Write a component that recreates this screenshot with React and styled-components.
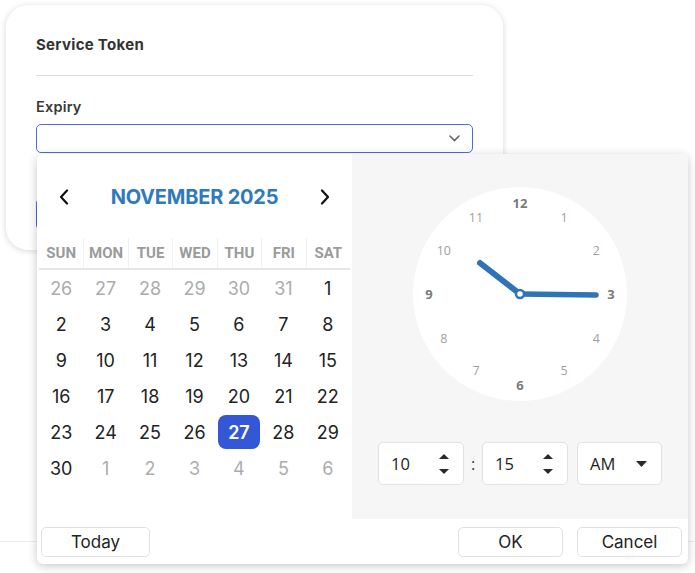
import React from "react";
import styled, { createGlobalStyle } from "styled-components";

const GlobalStyle = createGlobalStyle`
  html, body {
    margin: 0;
    padding: 0;
    background: #ffffff;
    font-family: Inter, "Open Sans", sans-serif;
  }
  * { box-sizing: border-box; }
`;

const Page = styled.div`
  position: relative;
  width: 695px;
  height: 573px;
  display: flex;
  flex-direction: column;
  padding: 5px 0 0 6px;
  overflow: hidden;
`;

const Card = styled.div`
  width: 497px;
  height: 245px;
  background: #fff;
  border-radius: 22px;
  box-shadow: 0 1px 6px rgba(0, 0, 0, 0.16);
  padding: 30px 30px 0;
  display: flex;
  flex-direction: column;
`;

const Title = styled.div`
  font-size: 15px;
  font-weight: 700;
  line-height: 20px;
  letter-spacing: 0.3px;
  color: #333;
`;

const Divider = styled.div`
  height: 1px;
  background: #dcdcdc;
  margin-top: 20px;
`;

const Label = styled.div`
  margin-top: 21px;
  font-size: 14.5px;
  font-weight: 600;
  line-height: 20px;
  letter-spacing: 0.2px;
  color: #3a3a3a;
`;

const Field = styled.div`
  position: relative;
  margin-top: 7px;
`;

const Select = styled.div`
  height: 29px;
  border: 1px solid #4f6be0;
  border-radius: 5px;
  display: flex;
  align-items: center;
  justify-content: flex-end;
  padding-right: 12px;
`;

const CardButton = styled.div`
  margin-top: 45px;
  width: 120px;
  height: 32px;
  border: 1px solid #4f6be0;
  border-radius: 5px;
`;

const Footer = styled.div`
  margin: auto 0 0 -6px;
  height: 32px;
  border-top: 1px solid #ececec;
`;

const Popup = styled.div`
  position: absolute;
  top: calc(100% + 1px);
  left: 1px;
  width: 651px;
  height: 410px;
  background: #fff;
  border-radius: 6px;
  box-shadow: 0 2px 10px rgba(0, 0, 0, 0.22);
  display: flex;
  flex-direction: column;
  overflow: hidden;
  z-index: 10;
`;

const PopupBody = styled.div`
  height: 365px;
  display: flex;
`;

const Calendar = styled.div`
  width: 315px;
  padding: 0 2px;
  background: #fff;
`;

const Header = styled.div`
  height: 80px;
  padding: 6px 18px 0;
  display: flex;
  align-items: center;
  justify-content: space-between;
`;

const NavButton = styled.div`
  width: 14px;
  display: flex;
  justify-content: center;
`;

const MonthTitle = styled.div`
  font-size: 20px;
  font-weight: 700;
  color: #2f7abd;
  letter-spacing: -0.2px;
`;

const WeekRow = styled.div`
  display: grid;
  grid-template-columns: repeat(7, 1fr);
  height: 36px;
  border-bottom: 2px solid #e6e6e6;
`;

const WeekDay = styled.div`
  display: flex;
  align-items: center;
  justify-content: center;
  font-family: Roboto, Inter, sans-serif;
  font-size: 15px;
  font-weight: 700;
  color: #9b9b9b;
  border-left: ${(p) => (p.first ? "none" : "1px solid #f0f0f0")};
  margin-top: 4px;
`;

const DayGrid = styled.div`
  display: grid;
  grid-template-columns: repeat(7, 1fr);
  grid-auto-rows: 36px;
`;

const Day = styled.div`
  display: flex;
  align-items: center;
  justify-content: center;
  margin: 1px;
  border-radius: 8px;
  font-size: 18px;
  font-weight: ${(p) => (p.selected ? 600 : 400)};
  color: ${(p) => (p.selected ? "#fff" : p.muted ? "#acacac" : "#222")};
  background: ${(p) => (p.selected ? "#3457d8" : "transparent")};
`;

const TimePanel = styled.div`
  flex: 1;
  background: #f6f6f6;
  display: flex;
  flex-direction: column;
  align-items: center;
  padding-top: 33px;
`;

const ClockFace = styled.svg`
  display: block;
  font-family: "Open Sans", sans-serif;
`;

const TimeRow = styled.div`
  margin-top: 41px;
  display: flex;
  align-items: center;
`;

const TimeBox = styled.div`
  width: ${(p) => p.w}px;
  height: 43px;
  background: #fff;
  border: 1px solid #e2e2e2;
  border-radius: 5px;
  display: flex;
  align-items: center;
  justify-content: space-between;
  padding: 0 14px 0 12px;
  font-family: "Open Sans", sans-serif;
  font-size: 16.5px;
  color: #222;
`;

const Colon = styled.div`
  width: 18px;
  text-align: center;
  font-family: "Open Sans", sans-serif;
  font-size: 16px;
  color: #333;
`;

const Spinner = styled.div`
  display: flex;
  flex-direction: column;
  gap: 10px;
`;

const Gap = styled.div`
  width: 9px;
`;

const ActionBar = styled.div`
  height: 45px;
  display: flex;
  align-items: center;
  padding: 0 6px 0 4px;
  gap: 14px;
`;

const ActionButton = styled.div`
  width: ${(p) => p.w}px;
  height: 30px;
  border: 1px solid #e0e0e0;
  border-radius: 5px;
  display: flex;
  align-items: center;
  justify-content: center;
  font-size: 17px;
  color: #222;
  margin-right: ${(p) => (p.push ? "auto" : "0")};
`;

const Chevron = ({ dir }) => (
  <svg width="10" height="16" viewBox="0 0 10 16">
    <path
      d={dir === "left" ? "M8 1.5 L2 8 L8 14.5" : "M2 1.5 L8 8 L2 14.5"}
      fill="none"
      stroke="#111"
      strokeWidth="2.2"
      strokeLinecap="round"
      strokeLinejoin="round"
    />
  </svg>
);

const Triangle = ({ up, w = 10, h = 5 }) => (
  <svg width={w} height={h} viewBox={`0 0 ${w} ${h}`}>
    <path d={up ? `M0 ${h} L${w / 2} 0 L${w} ${h} Z` : `M0 0 L${w / 2} ${h} L${w} 0 Z`} fill="#2a2a2a" />
  </svg>
);

const weekDays = ["SUN", "MON", "TUE", "WED", "THU", "FRI", "SAT"];

const days = [
  ...[26, 27, 28, 29, 30, 31].map((d) => ({ d, muted: true })),
  ...Array.from({ length: 30 }, (_, i) => ({ d: i + 1 })),
  ...[1, 2, 3, 4, 5, 6].map((d) => ({ d, muted: true })),
];

const Clock = () => {
  const c = 107;
  const nums = Array.from({ length: 12 }, (_, i) => i + 1);
  return (
    <ClockFace width="214" height="214" viewBox="0 0 214 214">
      <circle cx={c} cy={c} r={107} fill="#fff" />
      {nums.map((n) => {
        const major = n % 3 === 0;
        const r = major ? 91 : 88;
        const a = (n * 30 * Math.PI) / 180;
        return (
          <text
            key={n}
            x={c + r * Math.sin(a)}
            y={c - r * Math.cos(a)}
            textAnchor="middle"
            dominantBaseline="central"
            fontSize={major ? 13 : 12.5}
            fontWeight={major ? 700 : 400}
            fill={major ? "#7a7a7a" : "#a0a0a0"}
          >
            {n}
          </text>
        );
      })}
      <line x1={c} y1={c} x2={c - 40} y2={c - 31} stroke="#2f74b6" strokeWidth="6" strokeLinecap="round" />
      <line x1={c} y1={c} x2={c + 76} y2={c + 1} stroke="#2f74b6" strokeWidth="5.5" strokeLinecap="round" />
      <circle cx={c} cy={c} r={4} fill="#fff" stroke="#2f74b6" strokeWidth="2.5" />
    </ClockFace>
  );
};

const App = () => {
  return (
    <>
      <GlobalStyle />
      <Page>
        <Card>
          <Title>Service Token</Title>
          <Divider />
          <Label>Expiry</Label>
          <Field>
            <Select>
              <svg width="11" height="7" viewBox="0 0 11 7">
                <path d="M1 1 L5.5 5.5 L10 1" fill="none" stroke="#666" strokeWidth="1.6" strokeLinecap="round" />
              </svg>
            </Select>
            <Popup>
              <PopupBody>
                <Calendar>
                  <Header>
                    <NavButton>
                      <Chevron dir="left" />
                    </NavButton>
                    <MonthTitle>NOVEMBER 2025</MonthTitle>
                    <NavButton>
                      <Chevron dir="right" />
                    </NavButton>
                  </Header>
                  <WeekRow>
                    {weekDays.map((w, i) => (
                      <WeekDay key={w} first={i === 0}>
                        {w}
                      </WeekDay>
                    ))}
                  </WeekRow>
                  <DayGrid>
                    {days.map((x, i) => (
                      <Day key={i} muted={x.muted} selected={!x.muted && x.d === 27}>
                        {x.d}
                      </Day>
                    ))}
                  </DayGrid>
                </Calendar>
                <TimePanel>
                  <Clock />
                  <TimeRow>
                    <TimeBox w={86}>
                      10
                      <Spinner>
                        <Triangle up />
                        <Triangle />
                      </Spinner>
                    </TimeBox>
                    <Colon>:</Colon>
                    <TimeBox w={86}>
                      15
                      <Spinner>
                        <Triangle up />
                        <Triangle />
                      </Spinner>
                    </TimeBox>
                    <Gap />
                    <TimeBox w={85}>
                      AM
                      <Triangle w={11} h={6} />
                    </TimeBox>
                  </TimeRow>
                </TimePanel>
              </PopupBody>
              <ActionBar>
                <ActionButton w={109} push>
                  Today
                </ActionButton>
                <ActionButton w={105}>OK</ActionButton>
                <ActionButton w={105}>Cancel</ActionButton>
              </ActionBar>
            </Popup>
          </Field>
          <CardButton />
        </Card>
        <Footer />
      </Page>
    </>
  );
};

export default App;
